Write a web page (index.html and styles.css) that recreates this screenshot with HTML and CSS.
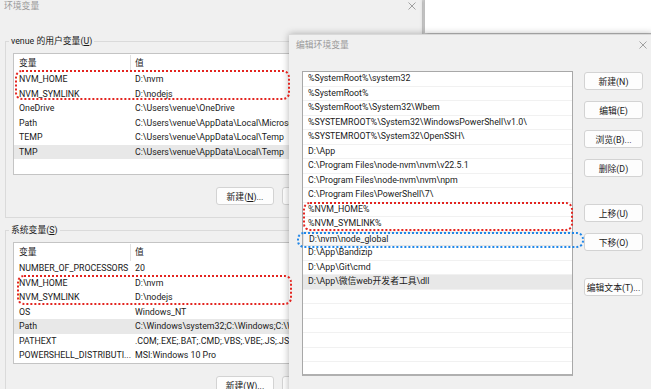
FILE: index.html
```html
<!DOCTYPE html>
<html lang="zh-CN">

<head>
    <meta charset="UTF-8">
    <meta name="viewport" content="width=device-width, initial-scale=1.0">
    <title>环境变量</title>
    <link rel="stylesheet" href="styles.css">
</head>

<body>

    <div class="desktop">

        <!-- back window: 环境变量 -->
        <div class="window env-window">
            <div class="titlebar">
                <span class="title">环境变量</span>
                <svg class="close-icon" width="8" height="8" viewBox="0 0 8 8">
                    <path d="M0.5 0.5 L7.5 7.5 M7.5 0.5 L0.5 7.5" />
                </svg>
            </div>

            <div class="group">
                <div class="group-label">venue 的用户变量(<u>U</u>)</div>
                <div class="var-list">
                    <div class="var-head"><span class="col-name">变量</span><span class="col-value">值</span></div>
                    <div class="var-row"><span class="col-name">NVM_HOME</span><span class="col-value">D:\nvm</span></div>
                    <div class="var-row"><span class="col-name">NVM_SYMLINK</span><span class="col-value">D:\nodejs</span></div>
                    <div class="var-row"><span class="col-name">OneDrive</span><span class="col-value">C:\Users\venue\OneDrive</span></div>
                    <div class="var-row"><span class="col-name">Path</span><span class="col-value">C:\Users\venue\AppData\Local\Microsoft\WindowsApps;</span></div>
                    <div class="var-row"><span class="col-name">TEMP</span><span class="col-value">C:\Users\venue\AppData\Local\Temp</span></div>
                    <div class="var-row selected"><span class="col-name">TMP</span><span class="col-value">C:\Users\venue\AppData\Local\Temp</span></div>
                </div>
                <div class="btn-row">
                    <button class="btn">新建(<u>N</u>)...</button>
                    <button class="btn">编辑(<u>E</u>)...</button>
                    <button class="btn">删除(<u>D</u>)</button>
                </div>
            </div>

            <div class="group system-group">
                <div class="group-label">系统变量(<u>S</u>)</div>
                <div class="var-list">
                    <div class="var-head"><span class="col-name">变量</span><span class="col-value">值</span></div>
                    <div class="var-row"><span class="col-name">NUMBER_OF_PROCESSORS</span><span class="col-value">20</span></div>
                    <div class="var-row"><span class="col-name">NVM_HOME</span><span class="col-value">D:\nvm</span></div>
                    <div class="var-row"><span class="col-name">NVM_SYMLINK</span><span class="col-value">D:\nodejs</span></div>
                    <div class="var-row"><span class="col-name">OS</span><span class="col-value">Windows_NT</span></div>
                    <div class="var-row selected"><span class="col-name">Path</span><span class="col-value">C:\Windows\system32;C:\Windows;C:\Windows\System32\Wbem</span></div>
                    <div class="var-row"><span class="col-name">PATHEXT</span><span class="col-value">.COM;.EXE;.BAT;.CMD;.VBS;.VBE;.JS;.JSE;.WSF;.WSH;.MSC</span></div>
                    <div class="var-row"><span class="col-name">POWERSHELL_DISTRIBUTI...</span><span class="col-value">MSI:Windows 10 Pro</span></div>
                </div>
                <div class="btn-row">
                    <button class="btn">新建(<u>W</u>)...</button>
                    <button class="btn">编辑(<u>I</u>)...</button>
                    <button class="btn">删除(<u>L</u>)</button>
                </div>
            </div>
        </div>

        <!-- white window peeking in the top right -->
        <div class="window top-window"></div>

        <!-- front dialog: 编辑环境变量 -->
        <div class="window edit-window">
            <div class="titlebar edit-titlebar">
                <span class="title">编辑环境变量</span>
                <svg class="close-icon" width="8" height="8" viewBox="0 0 8 8">
                    <path d="M0.5 0.5 L7.5 7.5 M7.5 0.5 L0.5 7.5" />
                </svg>
            </div>

            <div class="edit-body">
                <div class="path-list">
                    <div class="path-row">%SystemRoot%\system32</div>
                    <div class="path-row">%SystemRoot%</div>
                    <div class="path-row">%SystemRoot%\System32\Wbem</div>
                    <div class="path-row">%SYSTEMROOT%\System32\WindowsPowerShell\v1.0\</div>
                    <div class="path-row">%SYSTEMROOT%\System32\OpenSSH\</div>
                    <div class="path-row">D:\App</div>
                    <div class="path-row">C:\Program Files\node-nvm\nvm\v22.5.1</div>
                    <div class="path-row">C:\Program Files\node-nvm\nvm\npm</div>
                    <div class="path-row">C:\Program Files\PowerShell\7\</div>
                    <div class="path-row">%NVM_HOME%</div>
                    <div class="path-row">%NVM_SYMLINK%</div>
                    <div class="path-row focused">D:\nvm\node_global</div>
                    <div class="path-row">D:\App\Bandizip</div>
                    <div class="path-row">D:\App\Git\cmd</div>
                    <div class="path-row selected">D:\App\微信web开发者工具\dll</div>
                    <div class="path-row"></div>
                    <div class="path-row"></div>
                    <div class="path-row"></div>
                    <div class="path-row"></div>
                    <div class="path-row"></div>
                    <div class="path-row"></div>
                    <div class="path-row"></div>
                </div>

                <div class="side-buttons">
                    <button class="btn btn-side">新建(N)</button>
                    <button class="btn btn-side">编辑(E)</button>
                    <button class="btn btn-side">浏览(B)...</button>
                    <button class="btn btn-side">删除(D)</button>
                    <button class="btn btn-side btn-spaced">上移(U)</button>
                    <button class="btn btn-side">下移(O)</button>
                    <button class="btn btn-side btn-spaced">编辑文本(T)...</button>
                </div>
            </div>
        </div>

        <!-- hand-drawn highlights on top of the screenshot -->
        <div class="mark mark-red mark-user"></div>
        <div class="mark mark-red mark-system"></div>
        <div class="mark mark-red mark-path"></div>
        <div class="mark mark-blue mark-global"></div>

    </div>

</body>

</html>
```

FILE: styles.css
```css
* {
    box-sizing: border-box;
}

body {
    margin: 0;
    background-color: #f0f0f0;
    font-family: Roboto, 'Noto Sans CJK SC', sans-serif;
    font-size: 8.8px;
    color: #1a1a1a;
    overflow: hidden;
}

.desktop {
    position: relative;
    width: 651px;
    height: 389px;
    overflow: hidden;
}

/* windows on the desktop */
.window {
    position: absolute;
    overflow: hidden;
}

.env-window {
    left: 0;
    top: 0;
    width: 422px;
    height: 400px;
    background-color: #f0f0f0;
    box-shadow: 1px 0 3px rgba(0, 0, 0, 0.25);
}

.top-window {
    left: 425px;
    top: -10px;
    width: 240px;
    height: 43px;
    background-color: #ffffff;
    box-shadow: 0 1px 5px rgba(0, 0, 0, 0.4);
}

.edit-window {
    left: 289px;
    top: 34px;
    width: 364px;
    height: 370px;
    background-color: #f0f0f0;
    box-shadow: 0 0 7px rgba(0, 0, 0, 0.3);
    border-top: 1px solid #d9d9d9;
}

/* title bars */
.titlebar {
    display: flex;
    justify-content: space-between;
    align-items: center;
    height: 12px;
    padding: 0 6px 0 4px;
}

.title {
    color: #9a9a9a;
    line-height: 12px;
}

.close-icon path {
    stroke: #a0a0a0;
    stroke-width: 1;
    fill: none;
}

.edit-titlebar {
    height: 19px;
    padding: 0 6px 0 7px;
}

/* group boxes */
.group {
    margin: 29px 5px 0 5px;
    border: 1px solid #dadada;
    padding: 0 7px 12px 7px;
}

.system-group {
    margin-top: 12px;
}

.group-label {
    width: max-content;
    margin: -7px 0 0 -4px;
    padding: 0 2px;
    line-height: 12px;
    background-color: #f0f0f0;
}

.var-list {
    width: 400px;
    height: 122px;
    margin-top: 6px;
    background-color: #ffffff;
    border: 1px solid #c4c4c4;
    overflow: hidden;
}

.var-head,
.var-row {
    display: flex;
    white-space: nowrap;
}

.var-head {
    height: 18px;
    line-height: 16px;
    padding-top: 1px;
}

.var-row {
    height: 14.5px;
    line-height: 14.5px;
}

.col-name {
    width: 117px;
    flex-shrink: 0;
    padding-left: 5px;
    overflow: hidden;
}

.col-value {
    padding-left: 4px;
}

.var-head .col-name {
    border-right: 1px solid #e2e2e2;
}

.selected {
    background-color: #e8e8e8;
}

.btn-row {
    display: flex;
    gap: 8px;
    margin-top: 12px;
    padding-left: 203px;
}

.btn {
    flex-shrink: 0;
    width: 58px;
    height: 18px;
    padding: 0;
    background-color: #fdfdfd;
    border: 1px solid #d3d3d3;
    border-radius: 3px;
    font-family: inherit;
    font-size: 8.8px;
    color: #1a1a1a;
    white-space: nowrap;
}

/* edit dialog */
.edit-body {
    display: flex;
    gap: 11px;
    margin-top: 17px;
    padding-left: 13px;
}

.path-list {
    width: 271px;
    height: 305px;
    background-color: #ffffff;
    border: 1px solid #a8a8a8;
    border-bottom: 2px solid #b0b0b0;
    overflow: hidden;
}

.path-row {
    height: 14.5px;
    line-height: 13.5px;
    padding-left: 5px;
    border-bottom: 1px solid #f1f1f1;
    white-space: nowrap;
}

.path-row.focused {
    background-color: #f7f7f7;
    border: 1px solid #e4e4e4;
}

.side-buttons {
    display: flex;
    flex-direction: column;
    gap: 11px;
    padding-top: 1px;
}

.btn-side {
    width: 59px;
}

.btn-spaced {
    margin-top: 16px;
}

/* red / blue dotted highlights */
.mark {
    position: absolute;
    border-width: 2px;
    border-style: dotted;
    border-radius: 7px;
}

.mark-red {
    border-color: #e3241f;
}

.mark-blue {
    border-color: #1f86e8;
}

.mark-user {
    left: 15px;
    top: 70px;
    width: 275px;
    height: 30px;
}

.mark-system {
    left: 17px;
    top: 275px;
    width: 275px;
    height: 30px;
}

.mark-path {
    left: 303px;
    top: 202px;
    width: 270px;
    height: 29px;
}

.mark-global {
    left: 297px;
    top: 232px;
    width: 287px;
    height: 16px;
}
```
